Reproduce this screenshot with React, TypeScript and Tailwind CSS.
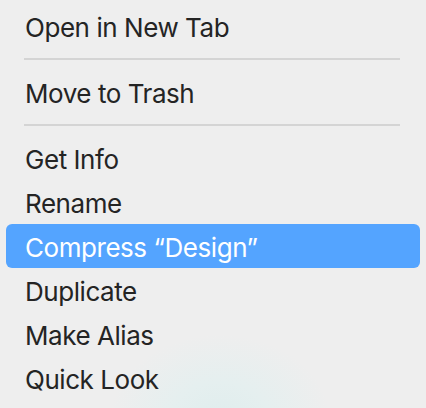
const groups: string[][] = [
  ['Open in New Tab'],
  ['Move to Trash'],
  ['Get Info', 'Rename', 'Compress “Design”', 'Duplicate', 'Make Alias', 'Quick Look'],
]

const active = 'Compress “Design”'

function MenuItem({ label }: { label: string }) {
  const isActive = label === active
  return (
    <li
      className={
        isActive
          ? 'h-[44px] rounded-[6px] bg-[#54a4ff] px-[19px] pt-[3px] text-[26px] leading-[41px] text-white'
          : 'h-[44px] px-[19px] pt-[3px] text-[26px] leading-[41px] text-[#242424]'
      }
    >
      {label}
    </li>
  )
}

export default function App() {
  return (
    <div
      className="h-[408px] w-[426px] overflow-hidden bg-[#eeeeee] bg-[radial-gradient(ellipse_110px_85px_at_220px_420px,#dfeded_0%,#e5efef_45%,#eeeeee_100%)] px-[6px] pt-[4px] font-['Inter','Liberation_Sans',sans-serif] tracking-[-0.45px]"
    >
      <ul>
        {groups.map((group, gi) => (
          <li key={gi}>
            {gi > 0 && <div className="my-[10px] ml-[18px] mr-[20px] h-[2px] bg-[#d4d4d4]" />}
            <ul>
              {group.map((label) => (
                <MenuItem key={label} label={label} />
              ))}
            </ul>
          </li>
        ))}
      </ul>
    </div>
  )
}
